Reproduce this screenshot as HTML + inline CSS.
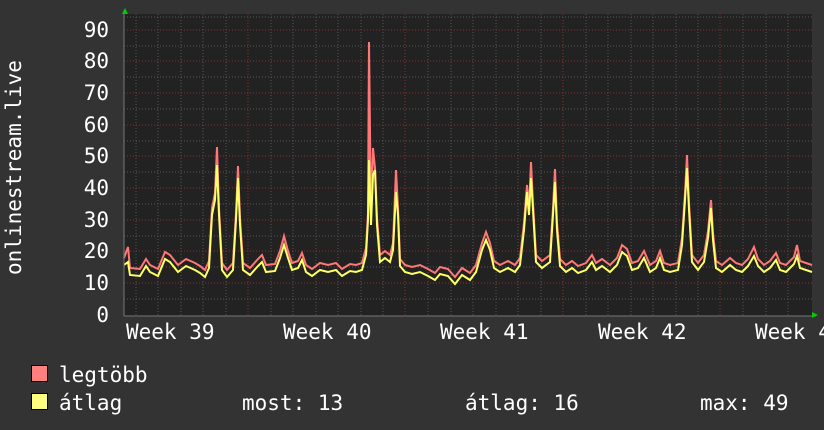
<!DOCTYPE html>
<html><head><meta charset="utf-8"><style>
body{margin:0;width:824px;height:430px;background:#333333;overflow:hidden;font-family:"DejaVu Sans Mono","Liberation Mono",monospace;color:#fff}
</style></head><body>
<svg width="824" height="430" style="position:absolute;left:0;top:0" font-family="DejaVu Sans Mono, Liberation Mono, monospace" font-size="21" fill="#fff">
<rect x="124" y="14" width="688" height="302" fill="#222"/>
<g stroke="#555" stroke-dasharray="1,2" stroke-width="1">
<path d="M124 299H812M124 283H812M124 267H812M124 251H812M124 236H812M124 220H812M124 204H812M124 188H812M124 172H812M124 156H812M124 141H812M124 125H812M124 109H812M124 93H812M124 77H812M124 61H812M124 46H812M124 30H812M124 17H812"/>
<path d="M136 14V316M158 14V316M181 14V316M203 14V316M226 14V316M271 14V316M293 14V316M316 14V316M338 14V316M361 14V316M383 14V316M428 14V316M451 14V316M473 14V316M496 14V316M518 14V316M541 14V316M586 14V316M608 14V316M631 14V316M653 14V316M676 14V316M698 14V316M743 14V316M766 14V316M788 14V316"/>
</g>
<g stroke="#8a3030" stroke-dasharray="1,2" stroke-width="1">
<path d="M124 283H812M124 251H812M124 220H812M124 188H812M124 156H812M124 125H812M124 93H812M124 61H812M124 30H812"/>
<path d="M248 14V316M405 14V316M563 14V316M720 14V316"/>
</g>
<polyline fill="none" stroke="#ff7777" stroke-width="2" points="124,258 128,247 130,268 140,269 146,259 150,265 158,269 165,252 170,255 178,265 186,259 195,263 200,266 205,270 209,261 212,208 215,193 217,147 219,208 222,263 227,270 233,263 236,213 238,166 240,218 243,263 250,268 258,259 262,255 266,265 275,264 280,251 284,236 288,251 292,263 298,261 302,253 306,265 312,269 320,263 328,265 336,263 342,269 350,264 356,265 362,263 366,248 368,213 369,42 371,218 373,148 375,168 377,218 380,255 385,251 390,255 393,243 396,170 398,208 400,259 405,265 412,267 420,265 428,269 435,273 440,267 448,269 455,277 462,268 470,273 476,265 482,243 486,232 490,243 494,261 500,265 508,261 515,265 520,258 524,223 527,185 529,208 531,162 533,203 536,255 542,261 550,255 553,208 555,169 557,223 560,259 566,265 572,261 578,266 586,263 592,255 596,263 602,259 610,265 617,258 622,245 627,249 632,263 638,261 644,251 650,265 656,261 660,251 664,263 670,265 678,263 682,238 685,193 687,155 689,203 692,255 698,263 704,255 708,231 711,200 713,233 716,261 722,265 730,258 736,263 742,265 748,259 754,247 758,259 764,265 770,261 776,253 780,263 786,265 794,257 797,245 800,261 806,263 812,265"/>
<polyline fill="none" stroke="#ffff66" stroke-width="2" points="124,265 128,262 130,275 140,276 146,266 150,272 158,276 165,259 170,262 178,272 186,266 195,270 200,273 205,277 209,268 212,215 215,200 217,165 219,215 222,270 227,277 233,270 236,220 238,178 240,225 243,270 250,275 258,266 262,262 266,272 275,271 280,258 284,245 288,258 292,270 298,268 302,260 306,272 312,276 320,270 328,272 336,270 342,276 350,271 356,272 362,270 366,255 368,220 369,160 371,225 373,175 375,170 377,225 380,262 385,258 390,262 393,250 396,192 398,215 400,266 405,272 412,274 420,272 428,276 435,280 440,274 448,276 455,284 462,275 470,280 476,272 482,250 486,240 490,250 494,268 500,272 508,268 515,272 520,265 524,230 527,192 529,215 531,178 533,210 536,262 542,268 550,262 553,215 555,182 557,230 560,266 566,272 572,268 578,273 586,270 592,262 596,270 602,266 610,272 617,265 622,252 627,256 632,270 638,268 644,258 650,272 656,268 660,258 664,270 670,272 678,270 682,245 685,200 687,168 689,210 692,262 698,270 704,262 708,238 711,208 713,240 716,268 722,272 730,265 736,270 742,272 748,266 754,256 758,266 764,272 770,268 776,260 780,270 786,272 794,264 797,256 800,268 806,270 812,272"/>
<path d="M124 316H816M124 10V316" stroke="#777" stroke-width="1"/>
<path d="M122 14L125 8L128 14Z" fill="#0c0"/>
<path d="M812 312L818 315L812 318Z" fill="#0c0"/>
<g text-anchor="end">
<text x="109" y="322">0</text><text x="109" y="290">10</text><text x="109" y="258">20</text><text x="109" y="227">30</text><text x="109" y="195">40</text><text x="109" y="163">50</text><text x="109" y="132">60</text><text x="109" y="100">70</text><text x="109" y="68">80</text><text x="109" y="37">90</text>
</g>
<text x="126" y="339">Week 39</text><text x="283" y="339">Week 40</text><text x="440" y="339">Week 41</text><text x="598" y="339">Week 42</text><text x="755" y="339">Week 4</text>
<text transform="translate(21,275) rotate(-90)" x="0" y="0">onlinestream.live</text>
<rect x="31.5" y="365.5" width="16" height="16" fill="#ff7f7f" stroke="#000"/>
<rect x="31.5" y="393.5" width="16" height="16" fill="#ffff7f" stroke="#000"/>
<text x="59" y="382">legtöbb</text>
<text x="59" y="410">átlag</text>
<text x="242" y="410">most: 13</text>
<text x="465" y="410">átlag: 16</text>
<text x="700" y="410">max: 49</text>
</svg>
</body></html>
